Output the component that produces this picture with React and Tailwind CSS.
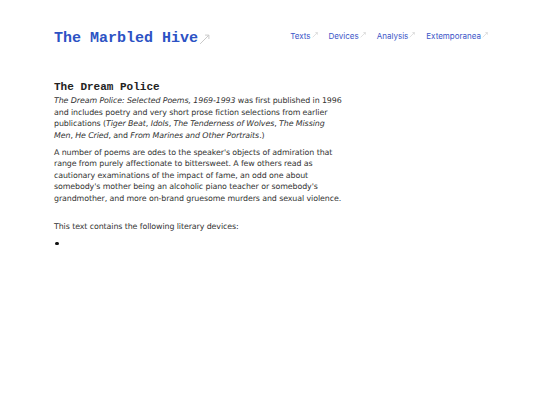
import React from "react";

function Arrow({ className = "" }) {
  return (
    <svg viewBox="0 0 10 10" className={className} fill="none" stroke="#c8c8c8" strokeWidth="0.9">
      <path d="M1 9 L9 1 M5.5 1 H9 V4.5" />
    </svg>
  );
}

export default function App() {
  const body = { fontFamily: '"DejaVu Sans", Verdana, sans-serif' };
  return (
    <div className="w-[540px] h-[405px] bg-white overflow-hidden">
      <header className="flex items-start justify-between pl-[54px] pr-[52px] pt-[29px]">
        <a className="flex items-end text-[#2c52c4] font-bold text-[15px] leading-[20px]" style={{ fontFamily: '"Liberation Mono", monospace' }}>
          The Marbled Hive
          <Arrow className="w-[11px] h-[11px] mb-[4px] ml-[1px]" />
        </a>
        <nav className="flex gap-[11px] text-[8px] text-[#3b55c8] pt-[1px]" style={{ fontFamily: 'Inter, sans-serif' }}>
          {["Texts", "Devices", "Analysis", "Extemporanea"].map((t) => (
            <span key={t} className="flex items-start">
              {t}
              <Arrow className="w-[6px] h-[6px] mt-[2px] ml-[1px]" />
            </span>
          ))}
        </nav>
      </header>
      <main className="pl-[54px] pt-[31px] w-[342px] text-[#333]" style={body}>
        <h1 className="text-[11px] font-bold leading-[14px] text-[#222]" style={{ fontFamily: '"Liberation Mono", monospace' }}>
          The Dream Police
        </h1>
        <div className="text-[7.9px] leading-[11.5px] tracking-[-0.1px]">
          <p className="mt-[1px]">
            <i>The Dream Police: Selected Poems, 1969-1993</i> was first published in 1996 and includes poetry and very short prose fiction selections from earlier publications (<i>Tiger Beat</i>, <i>Idols</i>, <i>The Tenderness of Wolves</i>, <i>The Missing Men</i>, <i>He Cried</i>, and <i>From Marines and Other Portraits</i>.)
          </p>
          <p className="mt-[5.5px]">
            A number of poems are odes to the speaker's objects of admiration that range from purely affectionate to bittersweet. A few others read as cautionary examinations of the impact of fame, an odd one about somebody's mother being an alcoholic piano teacher or somebody's grandmother, and more on-brand gruesome murders and sexual violence.
          </p>
          <p className="mt-[16.5px]">
            This text contains the following literary devices:
          </p>
          <div className="mt-[5.5px] flex items-center h-[11.5px] pl-[1px]">
            <span className="block w-[3.5px] h-[3.5px] rounded-full bg-[#111]"></span>
          </div>
        </div>
      </main>
    </div>
  );
}
